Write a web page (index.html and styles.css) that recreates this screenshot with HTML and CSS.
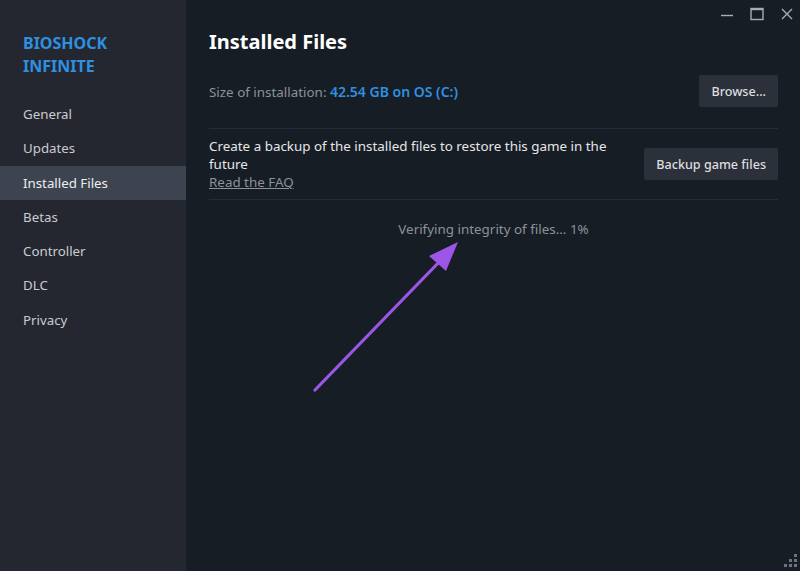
FILE: index.html
```html
<!DOCTYPE html>
<html lang="en">
<head>
  <meta charset="UTF-8">
  <title>Properties – BIOSHOCK INFINITE</title>
  <meta name="viewport" content="width=device-width, initial-scale=1.0">
  <link rel="stylesheet" href="styles.css">
</head>
<body>

<div class="window">
  <nav class="sidebar">
    <h2 class="game-title">BIOSHOCK<br>INFINITE</h2>
    <ul class="nav">
      <li>General</li>
      <li>Updates</li>
      <li class="active">Installed Files</li>
      <li>Betas</li>
      <li>Controller</li>
      <li>DLC</li>
      <li>Privacy</li>
    </ul>
  </nav>

  <main class="content">
    <div class="titlebar">
      <span class="winbtn">
        <svg width="14" height="14" viewBox="0 0 14 14"><path d="M1 8.5h12" stroke="#a7adb5" stroke-width="1.4"/></svg>
      </span>
      <span class="winbtn">
        <svg width="14" height="14" viewBox="0 0 14 14"><rect x="1" y="1.5" width="12" height="11" fill="none" stroke="#a7adb5" stroke-width="1.4"/><path d="M1 2.5h12" stroke="#a7adb5" stroke-width="1.4"/></svg>
      </span>
      <span class="winbtn">
        <svg width="14" height="14" viewBox="0 0 14 14"><path d="M2 2l10 10M12 2L2 12" stroke="#a7adb5" stroke-width="1.4"/></svg>
      </span>
    </div>

    <h1>Installed Files</h1>

    <div class="row size-row">
      <p class="size">Size of installation: <span class="size-value">42.54 GB on OS (C:)</span></p>
      <button>Browse...</button>
    </div>

    <hr>

    <div class="row backup">
      <div class="backup-text">
        Create a backup of the installed files to restore this game in the future<br>
        <a href="#">Read the FAQ</a>
      </div>
      <button>Backup game files</button>
    </div>

    <hr>

    <p class="verify">Verifying integrity of files... 1%</p>

    <!-- annotation arrow -->
    <svg class="arrow" width="800" height="571" viewBox="0 0 800 571">
      <path d="M316 390L443 259" stroke="#9d55e8" stroke-width="3.2" stroke-linecap="round"/>
      <path d="M459 242L430 256L447 271Z" fill="#9d55e8"/>
    </svg>

    <div class="grip">
      <i></i><i></i><i></i><i></i><i></i><i></i>
    </div>
  </main>
</div>

</body>
</html>
```

FILE: styles.css
```css
body {
  margin: 0;
  font-family: "Noto Sans", "Open Sans", sans-serif;
  background-color: #171d25;
  color: #dcdedf;
}

.window {
  display: flex;
  width: 800px;
  height: 571px;
  overflow: hidden;
}

.sidebar {
  width: 186px;
  flex-shrink: 0;
  background: #24272f;
  padding-top: 32px;
}

.game-title {
  margin: 0 0 19px 23px;
  font-size: 16px;
  line-height: 23px;
  font-weight: 700;
  color: #2f90e0;
}

.nav {
  list-style: none;
  margin: 0;
  padding: 0;
}

.nav li {
  height: 34.3px;
  line-height: 34px;
  padding-left: 23px;
  font-size: 13.3px;
  color: #c9ccd1;
}

.nav li.active {
  background: #3d4450;
  color: #eceef0;
}

.content {
  flex: 1;
  position: relative;
  padding: 0 22px 0 23px;
  background: #171d25;
}

.titlebar {
  height: 28px;
  display: flex;
  justify-content: flex-end;
  align-items: flex-start;
  margin-right: -24px;
}

.winbtn {
  width: 30px;
  height: 28px;
  display: flex;
  justify-content: center;
  padding-top: 7px;
  box-sizing: border-box;
}

h1 {
  margin: 0;
  font-size: 20px;
  line-height: 28px;
  font-weight: 700;
  color: #ffffff;
}

.row {
  display: flex;
  justify-content: space-between;
  align-items: center;
}

.size-row {
  margin-top: 19px;
}

.size {
  margin: 0;
  font-size: 13.4px;
  color: #8b929a;
}

.size-value {
  color: #2f90e0;
  font-size: 14px;
  font-weight: 600;
}

button {
  height: 32px;
  padding: 0 12px;
  background: #2b303a;
  color: #dcdedf;
  border: none;
  border-radius: 2px;
  font-family: inherit;
  font-size: 12.6px;
  font-weight: 500;
  cursor: pointer;
}

button:hover {
  background: #3d4450;
}

hr {
  border: none;
  border-top: 1px solid #262c36;
  margin: 21px 0 0;
}

.backup {
  margin-top: 8px;
}

.backup-text {
  width: 400px;
  font-size: 13.4px;
  line-height: 18px;
  color: #e4e6e8;
}

.backup-text a {
  color: #8b929a;
}

.backup + hr {
  margin-top: 8px;
}

.verify {
  margin: 19px 0 0;
  text-align: center;
  font-size: 13.4px;
  line-height: 20px;
  color: #8b929a;
}

.arrow {
  position: absolute;
  left: -187px;
  top: 0;
  pointer-events: none;
}

.grip {
  position: absolute;
  right: 3px;
  bottom: 4px;
  display: grid;
  grid-template-columns: repeat(3, 3px);
  grid-template-rows: repeat(3, 3px);
  gap: 2px;
}

.grip i {
  background: #6b7380;
}

.grip i:nth-child(1) { grid-column: 3; grid-row: 1; }
.grip i:nth-child(2) { grid-column: 2; grid-row: 2; }
.grip i:nth-child(3) { grid-column: 3; grid-row: 2; }
.grip i:nth-child(4) { grid-column: 1; grid-row: 3; }
.grip i:nth-child(5) { grid-column: 2; grid-row: 3; }
.grip i:nth-child(6) { grid-column: 3; grid-row: 3; }
```
